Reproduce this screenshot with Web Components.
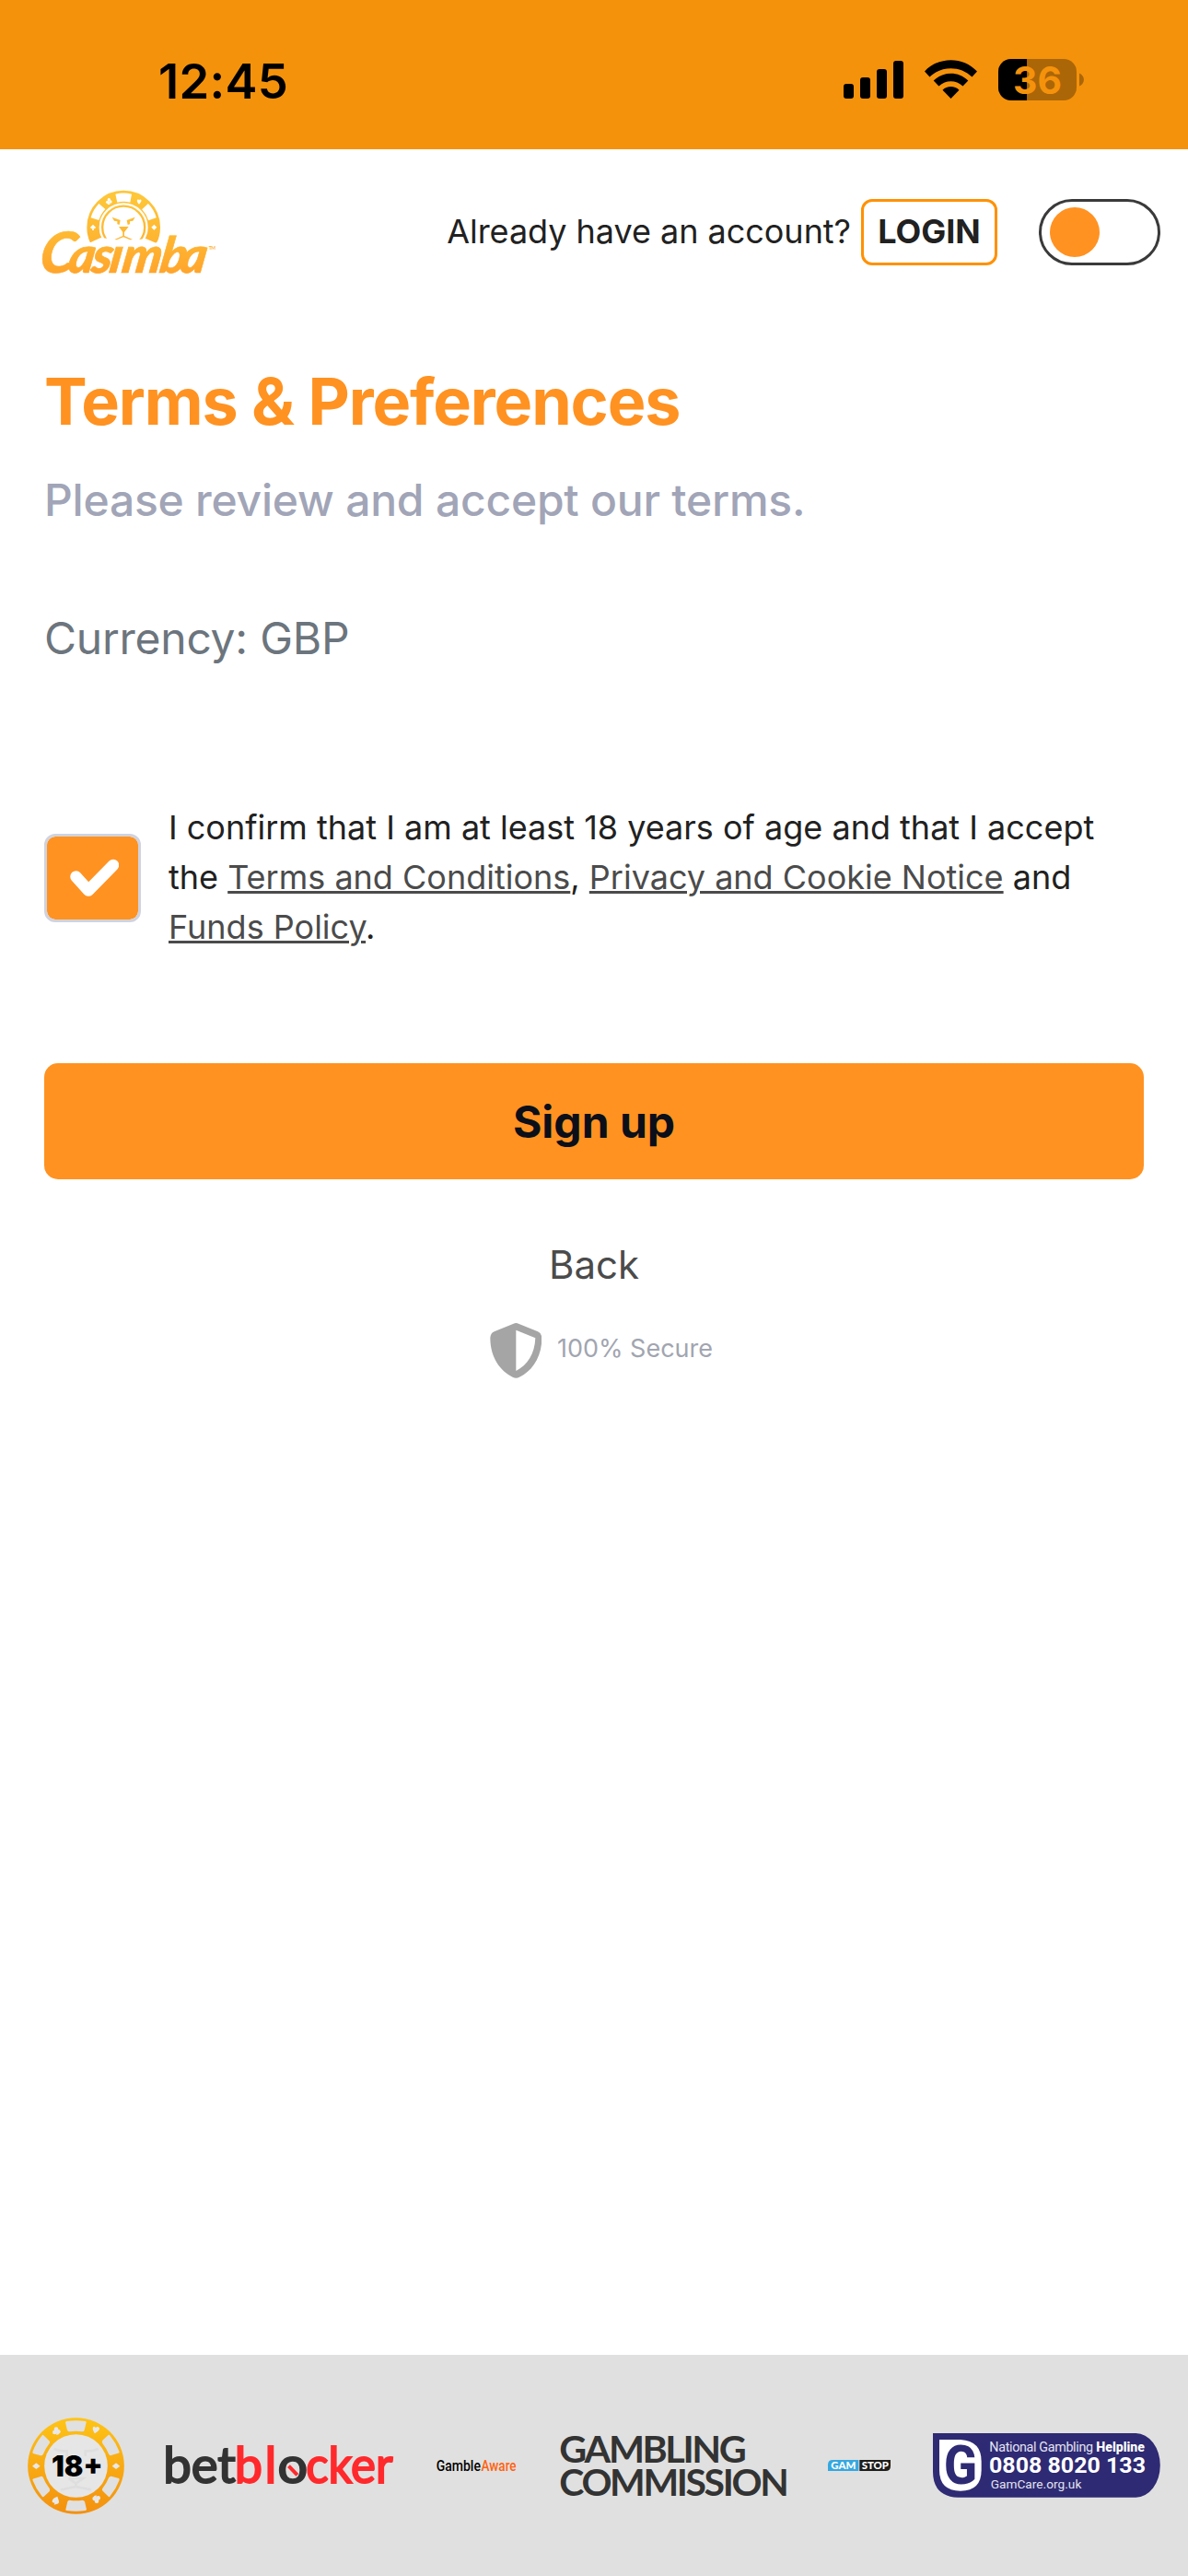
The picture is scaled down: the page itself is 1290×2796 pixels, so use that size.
<!DOCTYPE html>
<html lang="en">
<head>
<meta charset="utf-8">
<title>Terms &amp; Preferences</title>
<style>
  html, body { margin: 0; height: 100%; }
  body {
    display: flex;
    flex-direction: column;
    min-height: 2796px;
    background: #fff;
    color: #212121;
    font-family: Inter, "Liberation Sans", sans-serif;
    font-size: 36px;
    --brand: #ff9221;
    --link: #4b4b4b;
  }
</style>
</head>
<body>
  <status-bar time="12:45" battery="36"></status-bar>
  <site-header>
    <casimba-logo slot="logo"></casimba-logo>
    <span>Already have an account?</span>
    <login-button>LOGIN</login-button>
    <toggle-switch></toggle-switch>
  </site-header>
  <signup-step>
    <span slot="title">Terms &amp; Preferences</span>
    <span slot="subtitle">Please review and accept our terms.</span>
    <span slot="currency">Currency: GBP</span>
    <check-row>I confirm that I am at least 18 years of age and that I accept the <text-link>Terms and Conditions</text-link>, <text-link>Privacy and Cookie Notice</text-link> and <text-link>Funds Policy</text-link>.</check-row>
    <span slot="submit">Sign up</span>
    <span slot="back">Back</span>
    <secure-badge slot="badge">100% Secure</secure-badge>
  </signup-step>
  <logo-footer>
    <age-chip></age-chip>
    <betblocker-logo></betblocker-logo>
    <gambleaware-logo></gambleaware-logo>
    <commission-logo></commission-logo>
    <gamstop-logo></gamstop-logo>
    <gamcare-logo></gamcare-logo>
  </logo-footer>

<script>
// Registers an element whose shadow root is a fixed piece of markup.
function define(name, html) {
  customElements.define(name, class extends HTMLElement {
    constructor() {
      super();
      this.attachShadow({ mode: "open" }).innerHTML = html.trim();
    }
  });
}

customElements.define("status-bar", class extends HTMLElement {
  constructor() {
    super();
    this.shadow = this.attachShadow({ mode: "open" });
  }

  connectedCallback() {
    this.shadow.innerHTML = `
      <style>
        :host {
          display: flex;
          justify-content: space-between;
          box-sizing: border-box;
          height: 162px;
          padding: 52px 113px 38px 172px;
          background: #f5920b;
          color: #000;
        }
        time { font-size: 52.5px; font-weight: 600; line-height: 72px; letter-spacing: .3px; }
        svg { display: block; margin-top: 12px; overflow: visible; }
      </style>
      <time>${this.getAttribute("time")}</time>
      <svg width="261" height="46" viewBox="916 64 261 46">
        <rect x="916" y="91" width="11" height="16" rx="3"/>
        <rect x="934" y="84" width="11" height="23" rx="3"/>
        <rect x="952" y="75" width="11" height="32" rx="3"/>
        <rect x="970" y="66" width="11" height="41" rx="3"/>
        <path d="M1004 77.500 C1019 61 1046 61 1061 77.500 L1055.500 83.500 C1043 71 1022 71 1009.500 83.500 Z"/>
        <path d="M1013.700 87.500 C1024 77 1041 77 1051.300 87.500 L1045.500 93.500 C1038 86.500 1027 86.500 1019.500 93.500 Z"/>
        <path d="M1023.500 97.800 C1028 92.800 1037 92.800 1041.500 97.800 L1032.500 107 Z"/>
        <clipPath id="shell"><rect x="1084" y="64" width="85" height="45" rx="14"/></clipPath>
        <g clip-path="url(#shell)">
          <rect x="1084" y="64" width="85" height="45" fill="#ab6608"/>
          <rect x="1084" y="64" width="31" height="45"/>
        </g>
        <path d="M1172 79.500 C1178.500 82 1178.500 91 1172 93.500 Z" fill="#ab6608"/>
        <text x="1100" y="101.500" font-size="41" font-weight="700" textLength="53" lengthAdjust="spacingAndGlyphs" fill="#f5920b">${this.getAttribute("battery")}</text>
      </svg>
    `;
  }
});

define("site-header", `
  <style>
    :host {
      display: flex;
      align-items: center;
      box-sizing: border-box;
      height: 180px;
      padding: 0 30px 0 45px;
    }
    .account {
      display: flex;
      align-items: center;
      margin-left: auto;
      line-height: 52px;
      letter-spacing: -.03px;
    }
    ::slotted(span) { padding-bottom: 2px; }
  </style>
  <slot name="logo"></slot>
  <div class="account"><slot></slot></div>
`);

define("login-button", `
  <style>
    :host {
      display: block;
      box-sizing: border-box;
      width: 148px;
      height: 72px;
      margin: 0 45px 0 11px;
      border: 3px solid #ff9100;
      border-radius: 12px;
      font-weight: 700;
      line-height: 65px;
      text-align: center;
      letter-spacing: 0;
    }
  </style>
  <slot></slot>
`);

define("toggle-switch", `
  <style>
    :host {
      display: flex;
      align-items: center;
      box-sizing: border-box;
      width: 132px;
      height: 72px;
      padding: 0 9px;
      border: 3px solid #3a3a3a;
      border-radius: 36px;
    }
    i { width: 54px; height: 54px; border-radius: 50%; background: var(--brand); }
  </style>
  <i></i>
`);

define("casimba-logo", `
  <style>
    :host { display: block; }
    svg { display: block; overflow: visible; }
  </style>
  <svg width="189" height="90" viewBox="45 51 567 270">
    <defs>
      <linearGradient id="gold" gradientUnits="userSpaceOnUse" x1="0" y1="51" x2="0" y2="321">
        <stop offset="0" stop-color="#fec83a"/>
        <stop offset=".45" stop-color="#feba33"/>
        <stop offset="1" stop-color="#ffa52c"/>
      </linearGradient>
      <!-- same ramp, for the wordmark whose origin is its baseline -->
      <linearGradient id="gold-text" gradientUnits="userSpaceOnUse" x1="0" y1="-135" x2="0" y2="0">
        <stop offset="0" stop-color="#feba33"/>
        <stop offset="1" stop-color="#ffa52c"/>
      </linearGradient>
      <clipPath id="top"><path d="M180 40H450V190L418 221L385 207L355 211L312 209L270 208L238 204L204 220L180 205Z"/></clipPath>
      <!-- leaves out the dot of the i, the lion's chin sits there -->
      <clipPath id="dotless"><path d="M0 0H262V227H362V0H700V400H0Z"/></clipPath>
    </defs>
    <g clip-path="url(#top)">
      <circle cx="312.500" cy="170" r="99.500" fill="none" stroke="url(#gold)" stroke-width="40"/>
      <circle cx="312.500" cy="170" r="69" fill="none" stroke="url(#gold)" stroke-width="7"/>
      <g fill="#fff">
        <path id="slot" d="M286 62Q312 55 339 62L334 89Q312 84 292 89Z"/>
        <use href="#slot" transform="rotate(60 312.500 170)"/>
        <use href="#slot" transform="rotate(-60 312.500 170)"/>
        <path d="M412 161l9 9-9 9-9-9z"/>
        <path d="M213 161l9 9-3 5-4-1 1 6h-6l1-6-4 1-3-5z"/>
        <path d="M363 95C352 85 357 76 363 81C369 76 376 83 363 95Z"/>
        <g><circle cx="265" cy="80" r="5"/><circle cx="260" cy="88" r="5"/><circle cx="270" cy="87" r="5"/><path d="M264 85l5 11h-9z"/></g>
      </g>
    </g>
    <g fill="url(#gold)">
      <path d="M275 137L302 147L299 162L292 160L292 151L282 149Z"/>
      <path d="M350 137L323 147L326 162L333 160L333 151L343 149Z"/>
      <path d="M297 168H329L315 186V198L342 210L334 211L312 202L290 211L283 210L310 198V186Z"/>
    </g>
    <g clip-path="url(#dotless)">
      <text transform="translate(0 318) skewX(-9)" x="34 128 205 262 303 426 492" y="0" font-size="162" font-family="Lato, sans-serif" font-weight="900" font-style="italic" fill="url(#gold-text)" stroke="url(#gold-text)" stroke-width="2"><tspan font-size="184">C</tspan>asimba</text>
    </g>
    <text x="590" y="244" font-family="Lato, sans-serif" font-size="15" font-weight="700" fill="#feb231" textLength="22">TM</text>
  </svg>
`);

define("signup-step", `
  <style>
    :host { display: block; flex: 1; padding: 52px 48px 0; }
    h1, p { margin: 0; }
    h1 { color: var(--brand); font-size: 70px; font-weight: 700; line-height: 84px; letter-spacing: -1.1px; }
    .subtitle { margin-top: 35px; color: #a1a5b7; font-size: 48px; font-weight: 500; line-height: 60px; letter-spacing: -.22px; }
    .currency { margin: 90px 0 149px; color: #6c757d; font-size: 48px; line-height: 60px; letter-spacing: -.25px; }
    button {
      display: block;
      width: 100%;
      border: 0;
      padding: 0;
      background: none;
      font: inherit;
    }
    .submit {
      height: 126px;
      margin: 120px 0 63px;
      border-radius: 15px;
      background: var(--brand);
      color: #0b0f1a;
      font-size: 48px;
      font-weight: 700;
      line-height: 127px;
    }
    .back { color: var(--link); font-size: 42px; line-height: 60px; }
  </style>
  <h1><slot name="title"></slot></h1>
  <p class="subtitle"><slot name="subtitle"></slot></p>
  <p class="currency"><slot name="currency"></slot></p>
  <slot></slot>
  <button class="submit"><slot name="submit"></slot></button>
  <button class="back"><slot name="back"></slot></button>
  <slot name="badge"></slot>
`);

define("check-row", `
  <style>
    :host { display: flex; align-items: center; gap: 30px; }
    .box {
      flex: none;
      display: grid;
      place-items: center;
      box-sizing: border-box;
      width: 105px;
      height: 96px;
      border: 3px solid #d0d3df;
      border-radius: 12px;
      background: var(--brand);
      background-clip: padding-box;
    }
    p { margin: -1px 0 1px; width: 1030px; line-height: 54px; }
  </style>
  <span class="box">
    <svg width="56" height="44" viewBox="-1 0 56 44">
      <path d="M8.500 20.500L22 35.500L49 8" fill="none" stroke="#fff" stroke-width="12.500" stroke-linecap="round" stroke-linejoin="round"/>
    </svg>
  </span>
  <p><slot></slot></p>
`);

// No whitespace around the slot: it would be underlined too.
define("text-link", `<style>
  :host { color: var(--link); text-decoration: underline; text-decoration-thickness: 3px; }
</style><slot></slot>`);

define("secure-badge", `
  <style>
    :host {
      display: flex;
      justify-content: center;
      align-items: flex-start;
      gap: 17px;
      margin-top: 33px;
      padding-left: 16px;
      color: #a1a5b0;
      font-size: 27px;
      line-height: 55px;
    }
  </style>
  <svg width="56" height="60" viewBox="245 888 168 180">
    <path fill="#a5a5a5" fill-rule="evenodd" d="M322 890Q330 886 338 890L401 916Q413 921 414 936C414 1000 382 1044 341 1064Q330 1070 319 1064C278 1044 246 1000 246 936Q247 921 259 916ZM330 911V1044C367 1026 391 988 393 937Z"/>
  </svg>
  <span><slot></slot></span>
`);

define("logo-footer", `
  <style>
    :host {
      display: flex;
      align-items: center;
      justify-content: space-between;
      box-sizing: border-box;
      height: 240px;
      padding: 0 30px;
      background: #e0e0e0;
    }
    ::slotted(*) { display: block; }
    ::slotted(gambleaware-logo), ::slotted(commission-logo) { margin-left: 1.5px; }
  </style>
  <slot></slot>
`);

const svgStyle = "<style>svg { display: block; overflow: visible; }</style>";

define("age-chip", `${svgStyle}
  <svg width="105" height="105" viewBox="90 252 315 315">
    <linearGradient id="g" x1="0" y1="0" x2="0" y2="1">
      <stop offset="0" stop-color="#fec416"/>
      <stop offset="1" stop-color="#f3900f"/>
    </linearGradient>
    <circle cx="247.500" cy="409.500" r="157" fill="url(#g)"/>
    <circle cx="247.500" cy="409.500" r="103" fill="#e6e6e6"/>
    <g fill="#e0e0e0">
      <path id="s" d="M213 268Q214 264 218 264Q247 259 277 264Q282 264 281 268L275 293Q274 298 268 298Q247 295 227 298Q221 298 219 293Z"/>
      <use href="#s" transform="rotate(60 247.500 409.500)"/>
      <use href="#s" transform="rotate(120 247.500 409.500)"/>
      <use href="#s" transform="rotate(180 247.500 409.500)"/>
      <use href="#s" transform="rotate(240 247.500 409.500)"/>
      <use href="#s" transform="rotate(300 247.500 409.500)"/>
    </g>
    <g fill="none" stroke="#dedede" stroke-width="8">
      <path d="M176 354Q195 363 218 361V378M320 354Q301 363 278 361V378M224 450H271L247 467L224 450M247 467V477L198 487M247 477L297 487"/>
    </g>
    <g fill="#e8e8e8">
      <path d="M105 410l13-10 13 10-13 10z"/>
      <path d="M365 410l13-10 13 10-13 10z"/>
      <path d="M309 304C300 292 301 280 307 281L312 285Q318 279 323 285C327 292 318 298 309 304Z"/>
      <path d="M187 509C166 516 166 530 178 530L176 536L186 533Q193 532 192 524Z"/>
      <g id="club"><circle cx="183" cy="290" r="7"/><circle cx="178" cy="300" r="7"/><circle cx="190" cy="298" r="7"/><path d="M183 296l10 10-9 3z"/></g>
      <use href="#club" transform="rotate(180 249 407)"/>
    </g>
    <text x="168" y="443" font-size="92" font-weight="900" textLength="167" lengthAdjust="spacingAndGlyphs">18+</text>
  </svg>
`);

define("betblocker-logo", `${svgStyle}
  <svg width="245" height="40" viewBox="543 348 734 120">
    <g font-family="Lato, sans-serif" font-size="162" font-weight="400" stroke-width="6">
      <text x="531" y="465" textLength="236" lengthAdjust="spacingAndGlyphs" fill="#333" stroke="#333">bet</text>
      <text x="764" y="465" textLength="136" lengthAdjust="spacing" fill="#ff292c" stroke="#ff292c">bl</text>
      <text x="904" y="465" textLength="98" lengthAdjust="spacingAndGlyphs" fill="#333" stroke="#333">o</text>
      <text x="996" y="465" textLength="283" lengthAdjust="spacingAndGlyphs" fill="#ff292c" stroke="#ff292c">cker</text>
    </g>
    <path d="M940 410L968 439" stroke="#ff292c" stroke-width="12"/>
  </svg>
`);

define("gambleaware-logo", `${svgStyle}
  <svg width="88" height="13" viewBox="100 208 264 40">
    <g font-family="Roboto, sans-serif" font-size="49" font-weight="500">
      <text x="99" y="244" textLength="148" lengthAdjust="spacingAndGlyphs">Gamble</text>
      <text x="249" y="244" textLength="117" lengthAdjust="spacingAndGlyphs" fill="#ff6310">Aware</text>
    </g>
  </svg>
`);

define("commission-logo", `${svgStyle}
  <svg width="246" height="67" viewBox="507 128 738 200">
    <g font-family="Lato, sans-serif" font-size="121" font-weight="700" letter-spacing="-7" fill="#333">
      <text x="505" y="217" textLength="603" lengthAdjust="spacingAndGlyphs">GAMBLING</text>
      <text x="505" y="325" textLength="741" lengthAdjust="spacingAndGlyphs">COMMISSION</text>
    </g>
  </svg>
`);

define("gamstop-logo", `${svgStyle}
  <svg width="68" height="12" viewBox="90 210 204 36">
    <path d="M90 246V226Q90 210 106 210H190V246Z" fill="#35a8e0"/>
    <path d="M193 210H294V230Q294 246 278 246H193Z" fill="#1d1d1b"/>
    <g fill="#fff" font-family="Lato, sans-serif" font-size="34" font-weight="900">
      <text x="100" y="240" textLength="81" lengthAdjust="spacingAndGlyphs">GAM</text>
      <text x="200" y="240" textLength="88" lengthAdjust="spacingAndGlyphs">STOP</text>
    </g>
  </svg>
`);

define("gamcare-logo", `${svgStyle}
  <svg width="247" height="70" viewBox="429 123 741 210">
    <path d="M429 123H1090A79 104 0 0 1 1090 332H510Q429 328 429 248Z" fill="#2e2a73"/>
    <path d="M450 144H519Q587 148 587 215V243Q587 311 519 311Q450 311 450 243Z" fill="#fff"/>
    <g font-family="Roboto, sans-serif" fill="#fff">
      <text x="465" y="289" font-size="176" font-weight="800" textLength="108" lengthAdjust="spacingAndGlyphs" fill="#2e2a73">G</text>
      <text x="613" y="183" font-size="43" textLength="338" fill="#e4e3f2">National Gambling</text>
      <text x="961" y="183" font-size="43" font-weight="800" textLength="158" lengthAdjust="spacingAndGlyphs">Helpline</text>
      <text x="612" y="253" font-size="70" font-weight="700" textLength="510" lengthAdjust="spacingAndGlyphs">0808 8020 133</text>
      <text x="617" y="303" font-size="41" textLength="296" fill="#e4e3f2">GamCare.org.uk</text>
    </g>
  </svg>
`);
</script>
</body>
</html>
